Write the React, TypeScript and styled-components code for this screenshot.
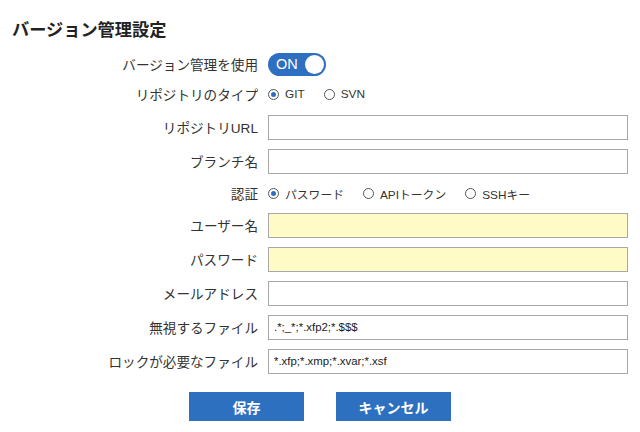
import React from "react";
import styled, { createGlobalStyle } from "styled-components";

const Global = createGlobalStyle`
  html, body { margin: 0; padding: 0; background: #fff; }
  body {
    font-family: "Liberation Sans", Arial, "Noto Sans CJK JP", sans-serif;
    color: #333;
  }
  * { box-sizing: border-box; }
`;

const Page = styled.div`
  width: 640px;
  height: 432px;
  padding: 18px 12px 0 0;
  overflow: hidden;
`;

const Title = styled.h1`
  margin: 0 0 8px 12px;
  font-size: 17.2px;
  line-height: 24px;
  font-weight: bold;
  color: #222;
`;

const Form = styled.div`
  display: grid;
  grid-template-columns: 258px 1fr;
  column-gap: 10px;
`;

const Label = styled.div<{ $h: number }>`
  height: ${(p) => p.$h}px;
  display: flex;
  align-items: center;
  justify-content: flex-end;
  font-size: 13.6px;
  color: #333;
  white-space: nowrap;
`;

const Field = styled.div<{ $h: number }>`
  height: ${(p) => p.$h}px;
  display: flex;
  align-items: center;
`;

const TextInput = styled.input<{ $yellow?: boolean }>`
  width: 100%;
  height: 25px;
  border: 1px solid #a8a8a8;
  border-radius: 0;
  background: ${(p) => (p.$yellow ? "#fffbc7" : "#fff")};
  padding: 0 5px;
  font-family: "Liberation Sans", Arial, sans-serif;
  font-size: 11.4px;
  color: #222;
  outline: none;
`;

const Toggle = styled.div`
  width: 58px;
  height: 23px;
  border-radius: 12px;
  background: #2e6fc1;
  display: flex;
  align-items: center;
  justify-content: space-between;
  padding: 0 2px 0 8px;
  color: #fff;
  font-size: 14.5px;
`;

const Knob = styled.span`
  width: 19px;
  height: 19px;
  border-radius: 50%;
  background: #fff;
`;

const RadioGroup = styled.div`
  display: flex;
  align-items: center;
  gap: 19px;
`;

const RadioOption = styled.label`
  display: flex;
  align-items: center;
  gap: 6px;
  font-size: 11.8px;
  color: #333;
`;

const RadioCircle = styled.span<{ $checked?: boolean }>`
  width: 11px;
  height: 11px;
  border-radius: 50%;
  border: 1px solid #555;
  background: #fff;
  display: flex;
  align-items: center;
  justify-content: center;
  &::after {
    content: "";
    width: 5px;
    height: 5px;
    border-radius: 50%;
    background: ${(p) => (p.$checked ? "#2e6fc1" : "transparent")};
  }
`;

const Buttons = styled.div`
  display: flex;
  justify-content: center;
  gap: 32px;
  margin: 14px 0 0 12px;
`;

const Button = styled.button`
  width: 115px;
  height: 29px;
  border: none;
  background: #2e70c0;
  color: #fff;
  font-family: "Liberation Sans", Arial, "Noto Sans CJK JP", sans-serif;
  font-weight: bold;
  font-size: 14px;
`;

const Radio = ({ label, checked }: { label: string; checked?: boolean }) => (
  <RadioOption>
    <RadioCircle $checked={checked} />
    {label}
  </RadioOption>
);

type Row = { label: string; h: number; content: React.ReactNode };

export default function App() {
  const rows: Row[] = [
    {
      label: "バージョン管理を使用",
      h: 28,
      content: (
        <Toggle>
          ON
          <Knob />
        </Toggle>
      ),
    },
    {
      label: "リポジトリのタイプ",
      h: 32,
      content: (
        <RadioGroup>
          <Radio label="GIT" checked />
          <Radio label="SVN" />
        </RadioGroup>
      ),
    },
    { label: "リポジトリURL", h: 34, content: <TextInput /> },
    { label: "ブランチ名", h: 34, content: <TextInput /> },
    {
      label: "認証",
      h: 30,
      content: (
        <RadioGroup>
          <Radio label="パスワード" checked />
          <Radio label="APIトークン" />
          <Radio label="SSHキー" />
        </RadioGroup>
      ),
    },
    { label: "ユーザー名", h: 34, content: <TextInput $yellow /> },
    { label: "パスワード", h: 34, content: <TextInput $yellow type="password" /> },
    { label: "メールアドレス", h: 34, content: <TextInput /> },
    {
      label: "無視するファイル",
      h: 34,
      content: <TextInput defaultValue=".*;_*;*.xfp2;*.$$$" />,
    },
    {
      label: "ロックが必要なファイル",
      h: 34,
      content: <TextInput defaultValue="*.xfp;*.xmp;*.xvar;*.xsf" />,
    },
  ];
  return (
    <Page>
      <Global />
      <Title>バージョン管理設定</Title>
      <Form>
        {rows.map((r) => (
          <React.Fragment key={r.label}>
            <Label $h={r.h}>{r.label}</Label>
            <Field $h={r.h}>{r.content}</Field>
          </React.Fragment>
        ))}
      </Form>
      <Buttons>
        <Button>保存</Button>
        <Button>キャンセル</Button>
      </Buttons>
    </Page>
  );
}
